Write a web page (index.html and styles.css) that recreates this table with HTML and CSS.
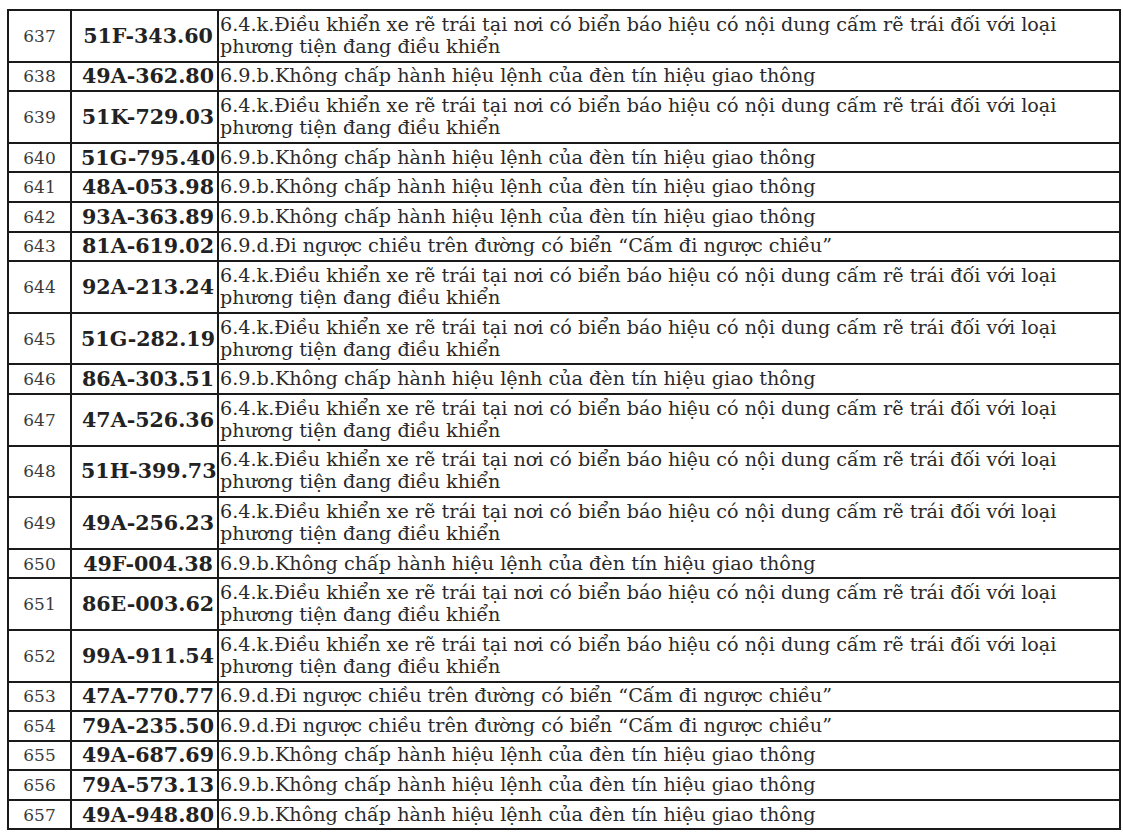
FILE: index.html
```html
<!DOCTYPE html>
<html lang="vi">
<head>
<meta charset="utf-8">
<title>Danh sách vi phạm</title>
<link rel="stylesheet" href="styles.css">
</head>
<body>
<table class="list">
<colgroup><col class="c-no"><col class="c-plate"><col class="c-desc"></colgroup>
<tbody>
<tr><td class="no">637</td><td class="plate">51F-343.60</td><td class="desc">6.4.k.Điều khiển xe rẽ trái tại nơi có biển báo hiệu có nội dung cấm rẽ trái đối với loại<br>phương tiện đang điều khiển</td></tr>
<tr><td class="no">638</td><td class="plate">49A-362.80</td><td class="desc">6.9.b.Không chấp hành hiệu lệnh của đèn tín hiệu giao thông</td></tr>
<tr><td class="no">639</td><td class="plate">51K-729.03</td><td class="desc">6.4.k.Điều khiển xe rẽ trái tại nơi có biển báo hiệu có nội dung cấm rẽ trái đối với loại<br>phương tiện đang điều khiển</td></tr>
<tr><td class="no">640</td><td class="plate">51G-795.40</td><td class="desc">6.9.b.Không chấp hành hiệu lệnh của đèn tín hiệu giao thông</td></tr>
<tr><td class="no">641</td><td class="plate">48A-053.98</td><td class="desc">6.9.b.Không chấp hành hiệu lệnh của đèn tín hiệu giao thông</td></tr>
<tr><td class="no">642</td><td class="plate">93A-363.89</td><td class="desc">6.9.b.Không chấp hành hiệu lệnh của đèn tín hiệu giao thông</td></tr>
<tr><td class="no">643</td><td class="plate">81A-619.02</td><td class="desc">6.9.d.Đi ngược chiều trên đường có biển “Cấm đi ngược chiều”</td></tr>
<tr><td class="no">644</td><td class="plate">92A-213.24</td><td class="desc">6.4.k.Điều khiển xe rẽ trái tại nơi có biển báo hiệu có nội dung cấm rẽ trái đối với loại<br>phương tiện đang điều khiển</td></tr>
<tr><td class="no">645</td><td class="plate">51G-282.19</td><td class="desc">6.4.k.Điều khiển xe rẽ trái tại nơi có biển báo hiệu có nội dung cấm rẽ trái đối với loại<br>phương tiện đang điều khiển</td></tr>
<tr><td class="no">646</td><td class="plate">86A-303.51</td><td class="desc">6.9.b.Không chấp hành hiệu lệnh của đèn tín hiệu giao thông</td></tr>
<tr><td class="no">647</td><td class="plate">47A-526.36</td><td class="desc">6.4.k.Điều khiển xe rẽ trái tại nơi có biển báo hiệu có nội dung cấm rẽ trái đối với loại<br>phương tiện đang điều khiển</td></tr>
<tr><td class="no">648</td><td class="plate">51H-399.73</td><td class="desc">6.4.k.Điều khiển xe rẽ trái tại nơi có biển báo hiệu có nội dung cấm rẽ trái đối với loại<br>phương tiện đang điều khiển</td></tr>
<tr><td class="no">649</td><td class="plate">49A-256.23</td><td class="desc">6.4.k.Điều khiển xe rẽ trái tại nơi có biển báo hiệu có nội dung cấm rẽ trái đối với loại<br>phương tiện đang điều khiển</td></tr>
<tr><td class="no">650</td><td class="plate">49F-004.38</td><td class="desc">6.9.b.Không chấp hành hiệu lệnh của đèn tín hiệu giao thông</td></tr>
<tr><td class="no">651</td><td class="plate">86E-003.62</td><td class="desc">6.4.k.Điều khiển xe rẽ trái tại nơi có biển báo hiệu có nội dung cấm rẽ trái đối với loại<br>phương tiện đang điều khiển</td></tr>
<tr><td class="no">652</td><td class="plate">99A-911.54</td><td class="desc">6.4.k.Điều khiển xe rẽ trái tại nơi có biển báo hiệu có nội dung cấm rẽ trái đối với loại<br>phương tiện đang điều khiển</td></tr>
<tr><td class="no">653</td><td class="plate">47A-770.77</td><td class="desc">6.9.d.Đi ngược chiều trên đường có biển “Cấm đi ngược chiều”</td></tr>
<tr><td class="no">654</td><td class="plate">79A-235.50</td><td class="desc">6.9.d.Đi ngược chiều trên đường có biển “Cấm đi ngược chiều”</td></tr>
<tr><td class="no">655</td><td class="plate">49A-687.69</td><td class="desc">6.9.b.Không chấp hành hiệu lệnh của đèn tín hiệu giao thông</td></tr>
<tr><td class="no">656</td><td class="plate">79A-573.13</td><td class="desc">6.9.b.Không chấp hành hiệu lệnh của đèn tín hiệu giao thông</td></tr>
<tr><td class="no">657</td><td class="plate">49A-948.80</td><td class="desc">6.9.b.Không chấp hành hiệu lệnh của đèn tín hiệu giao thông</td></tr>
</tbody>
</table>
</body>
</html>
```

FILE: styles.css
```css
html, body {
  margin: 0;
  background: #ffffff;
}
body {
  padding: 9px 0 0 7px;
  font-family: "DejaVu Serif", "Liberation Serif", serif;
  color: #2a2a2a;
}
.list {
  border-collapse: collapse;
  table-layout: fixed;
  width: 1112px;
}
.c-no { width: 63px; }
.c-plate { width: 147px; }
.c-desc { width: 902px; }
.list td {
  border: 2px solid #1a1a1a;
  padding: 2.8px 2px;
  line-height: 22px;
  vertical-align: middle;
  white-space: nowrap;
}
.list td.no {
  text-align: center;
  font-size: 17px;
  color: #3a3a3a;
}
.list td.plate {
  text-align: center;
  font-size: 20.6px;
  font-weight: bold;
  color: #222222;
  padding-left: 9px;
  padding-right: 2px;
}
.list td.desc {
  font-size: 19.2px;
  color: #2a2a2a;
  padding-left: 1px;
}
```
